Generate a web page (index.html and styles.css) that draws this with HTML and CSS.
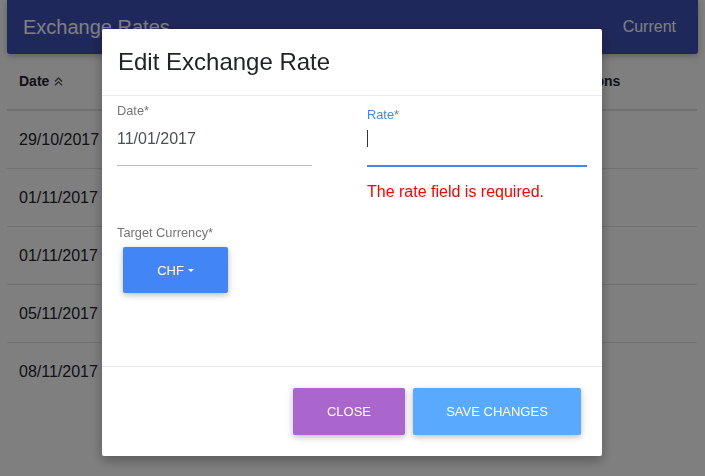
FILE: index.html
```html
<!DOCTYPE html>
<html lang="en">
<head>
<meta charset="utf-8">
<title>Exchange Rates</title>
<link rel="stylesheet" href="styles.css">
</head>
<body>
<div class="page">
  <nav class="navbar">
    <span class="brand">Exchange Rates</span>
    <span class="nav-link">Current</span>
  </nav>
  <table class="rates">
    <colgroup>
      <col class="c-date"><col class="c-mid"><col class="c-mid"><col class="c-rate"><col class="c-act">
    </colgroup>
    <thead>
      <tr>
        <th>Date <svg class="sort" width="9" height="9" viewBox="0 0 9 9"><polyline points="1,4.5 4.5,1 8,4.5" fill="none" stroke="currentColor" stroke-width="1.3"/><polyline points="1,8.3 4.5,4.8 8,8.3" fill="none" stroke="currentColor" stroke-width="1.3"/></svg></th>
        <th></th>
        <th></th>
        <th></th>
        <th>Actions</th>
      </tr>
    </thead>
    <tbody>
      <tr><td>29/10/2017</td><td></td><td></td><td></td><td></td></tr>
      <tr><td>01/11/2017</td><td></td><td></td><td></td><td></td></tr>
      <tr><td>01/11/2017</td><td></td><td></td><td></td><td></td></tr>
      <tr><td>05/11/2017</td><td></td><td></td><td></td><td></td></tr>
      <tr><td>08/11/2017</td><td></td><td></td><td></td><td></td></tr>
    </tbody>
  </table>
</div>

<div class="overlay">
  <div class="modal">
    <div class="modal-header">
      <h4 class="modal-title">Edit Exchange Rate</h4>
    </div>
    <div class="modal-body">
      <div class="form-row">
        <div class="col">
          <div class="field date-field">
            <label class="label">Date*</label>
            <div class="input">11/01/2017</div>
          </div>
        </div>
        <div class="col">
          <div class="field rate-field">
            <label class="label active">Rate*</label>
            <div class="input focused"><span class="caret-cursor"></span></div>
            <div class="error">The rate field is required.</div>
          </div>
        </div>
      </div>
      <div class="currency">
        <label class="label">Target Currency*</label>
        <button class="btn btn-primary dropdown">CHF<span class="caret"></span></button>
      </div>
    </div>
    <div class="modal-footer">
      <button class="btn btn-secondary">Close</button>
      <button class="btn btn-save">Save changes</button>
    </div>
  </div>
</div>
</body>
</html>
```
FILE: styles.css
```css
* { box-sizing: border-box; }
html, body { margin: 0; padding: 0; }
body {
  font-family: "Liberation Sans", Arial, sans-serif;
  color: #212529;
  background: #fff;
  width: 705px;
  height: 476px;
  overflow: hidden;
}
.page { padding: 0 7px; }

.navbar {
  height: 54px;
  background: #3f51b5;
  color: #fff;
  display: flex;
  align-items: center;
  justify-content: space-between;
  padding: 0 22px 0 16px;
  border-radius: 0 0 3px 3px;
  box-shadow: 0 2px 5px rgba(0,0,0,.16), 0 2px 10px rgba(0,0,0,.12);
}
.brand { font-size: 20px; line-height: 24px; }
.nav-link { font-size: 16px; line-height: 24px; }

.rates {
  width: 690px;
  border-collapse: collapse;
  table-layout: fixed;
}
.c-date, .c-mid { width: 140px; }
.c-rate { width: 130px; }
.c-act { width: 140px; }
.rates th {
  text-align: left;
  font-size: 14px;
  font-weight: bold;
  line-height: 21px;
  padding: 17px 12px;
  border-bottom: 2px solid #dee2e6;
  white-space: nowrap;
}
.sort { color: #555; margin-left: 1px; vertical-align: 0; }
.rates td {
  font-size: 16px;
  line-height: 24px;
  padding: 16.5px 12px;
}
.rates tbody tr + tr td { border-top: 1px solid #dee2e6; }

.overlay {
  position: fixed;
  inset: 0;
  background: rgba(0,0,0,.5);
  display: flex;
  justify-content: center;
  align-items: flex-start;
  padding: 29px 1px 0 0;
}
.modal {
  width: 500px;
  background: #fff;
  border-radius: 2px;
  box-shadow: 0 5px 11px 0 rgba(0,0,0,.18), 0 4px 15px 0 rgba(0,0,0,.15);
  display: flex;
  flex-direction: column;
}
.modal-header {
  padding: 15px 16px;
  border-bottom: 1px solid #e9ecef;
}
.modal-title {
  margin: 0;
  font-size: 24px;
  line-height: 36px;
  font-weight: normal;
  color: #212529;
}
.modal-body {
  padding: 7px 15px 0;
  min-height: 270px;
}
.form-row { display: flex; gap: 30px; }
.col { flex: 1; }
.label {
  display: block;
  font-size: 12.8px;
  line-height: 16px;
  color: #757575;
}
.label.active { color: #4285f4; }
.input {
  font-size: 16px;
  line-height: 24px;
  height: 39px;
  padding-bottom: 14px;
  border-bottom: 1px solid #bdbdbd;
  color: #495057;
}
.date-field .input { width: 195px; margin-top: 8px; }
.rate-field { padding-top: 4px; }
.rate-field .input {
  margin-top: 4px;
  height: 40px;
  border-bottom: 2px solid #4285f4;
}
.caret-cursor {
  display: inline-block;
  width: 1px;
  height: 17px;
  margin-top: 3px;
  background: #333;
  vertical-align: top;
}
.error {
  margin-top: 14.5px;
  font-size: 16px;
  line-height: 20px;
  color: #ff0000;
}
.currency { margin-top: 23.5px; }
.currency .label { margin-bottom: 1px; }

.btn {
  font-family: inherit;
  border: 0;
  border-radius: 2px;
  color: #fff;
  font-size: 13px;
  line-height: 19px;
  text-transform: uppercase;
  padding: 14px 34px;
  box-shadow: 0 2px 5px 0 rgba(0,0,0,.16), 0 2px 10px 0 rgba(0,0,0,.12);
  cursor: pointer;
}
.btn-primary { background: #4285f4; }
.dropdown {
  margin: 6px;
  width: 105px;
  height: 46px;
  padding: 0;
  display: flex;
  align-items: center;
  justify-content: center;
}
.caret {
  display: inline-block;
  margin-left: 4px;
  border-top: 3px solid #fff;
  border-left: 3px solid transparent;
  border-right: 3px solid transparent;
}
.modal-footer {
  border-top: 1px solid #e9ecef;
  padding: 21px;
  display: flex;
  justify-content: flex-end;
  gap: 8px;
}
.btn-secondary { background: #aa66cc; width: 112px; padding: 14px 0; }
.btn-save { background: #59a9ff; width: 168px; padding: 14px 0; }
```
